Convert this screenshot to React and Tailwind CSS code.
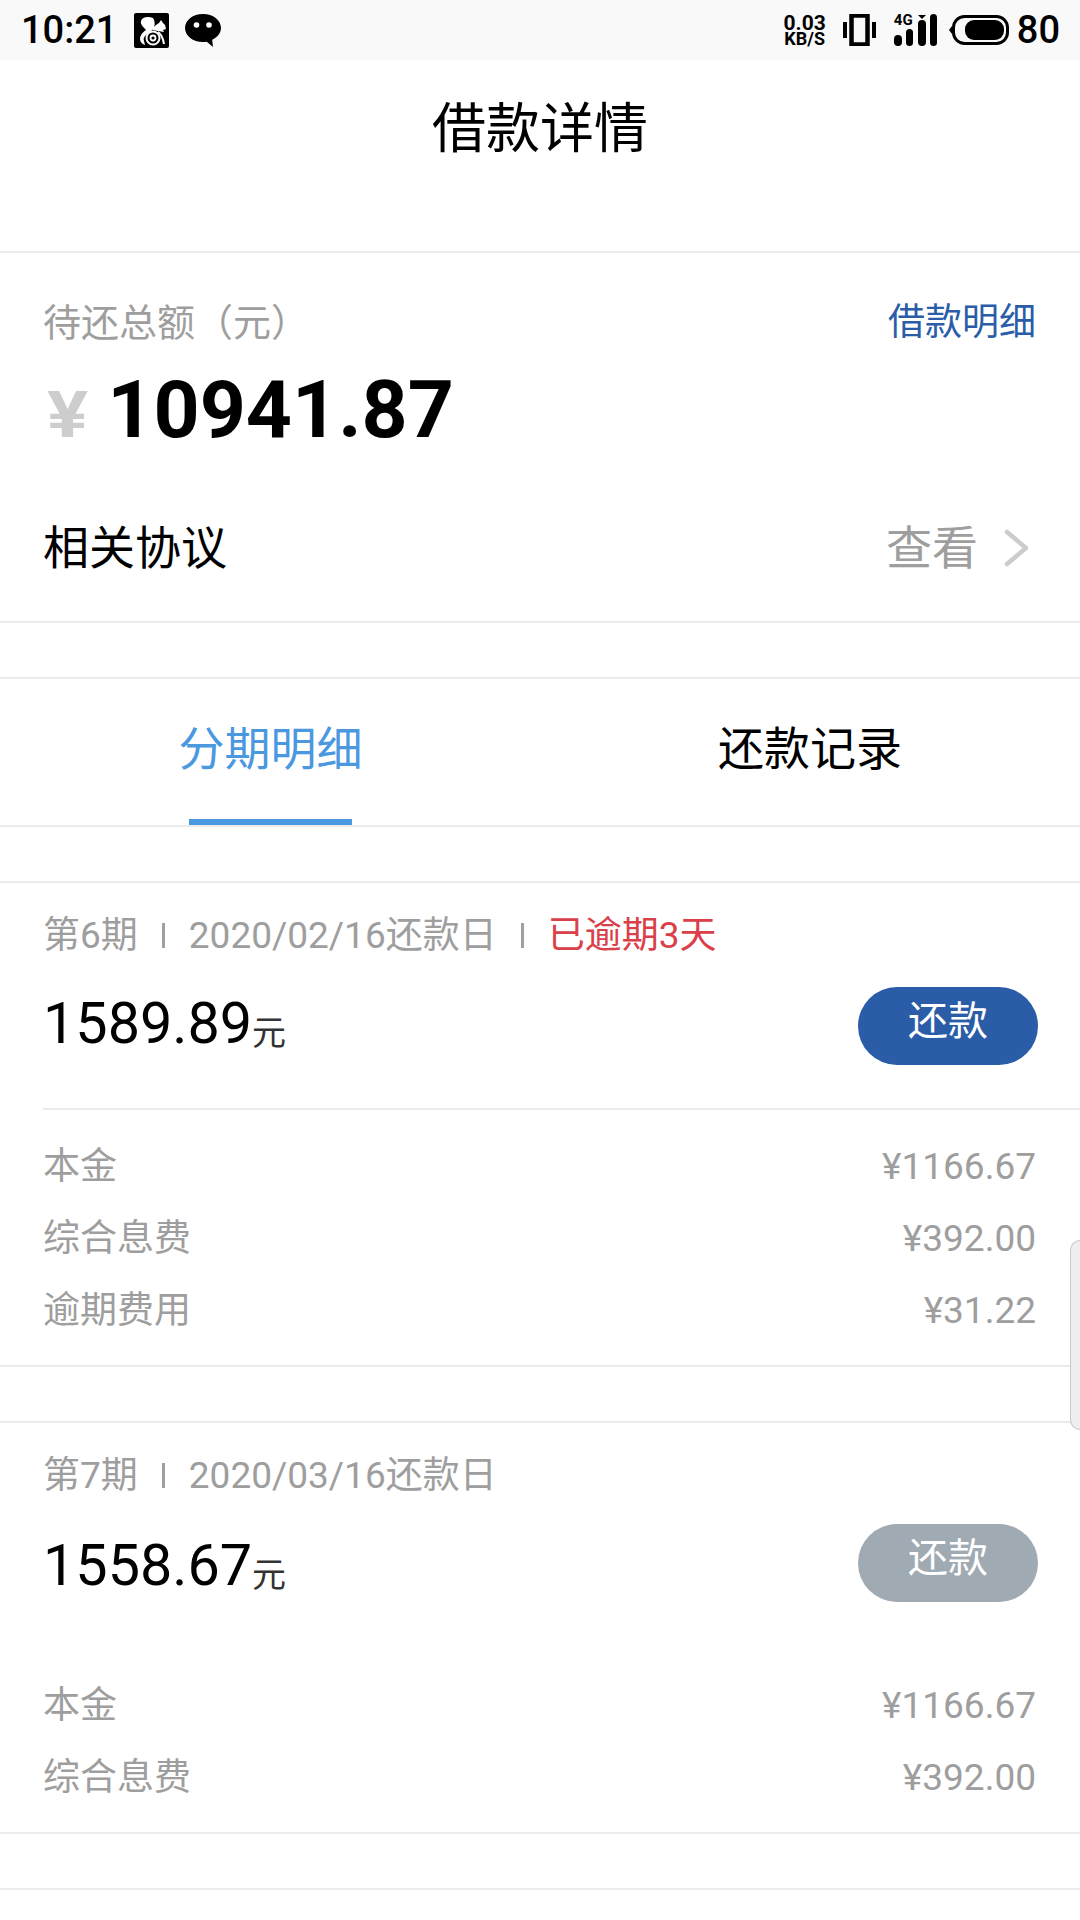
const cjk = '[font-family:Roboto,"Noto_Sans_CJK_SC",sans-serif]';

const UcIcon = () => (
  <svg width="35" height="35" viewBox="0 0 35 35">
    <rect width="35" height="35" rx="2" fill="#000" />
    {/* tail */}
    <path d="M19 5c-5-2-11-1-12 3-1 4 3 6 5 9-3 2-6 5-6 9 0 3 2 5 5 6l-1-4c-1-2 0-4 2-6 3-3 6-4 8-7 1-4 1-7-1-10z" fill="#fff" />
    {/* head and back */}
    <path d="M19 15l3-3 3-2 2-3 2 3 2 2 1 4-3 1 1 2-6-1-5-1z" fill="#fff" />
    {/* wheel */}
    <circle cx="19" cy="25" r="6.500" fill="none" stroke="#fff" strokeWidth="2" />
    <circle cx="19" cy="25" r="2.500" fill="none" stroke="#fff" strokeWidth="1.800" />
    <path d="M24 19c3 2 5 6 6 12" fill="none" stroke="#fff" strokeWidth="2" />
  </svg>
);

const ChatIcon = () => (
  <svg width="36" height="33" viewBox="0 0 36 33">
    <path d="M18 0C8 0 0 6.200 0 14s8 14 18 14c1.300 0 2.600-.1 3.800-.3L28 33l-.8-7.200C32.500 23.300 36 19 36 14 36 6.200 28 0 18 0z" fill="#000" />
    <circle cx="11.500" cy="11" r="2.800" fill="#fff" />
    <circle cx="24" cy="11" r="2.800" fill="#fff" />
  </svg>
);

const VibrateIcon = () => (
  <svg width="33" height="32" viewBox="0 0 33 32">
    <rect x="0" y="8" width="4" height="16" fill="#000" />
    <rect x="29" y="8" width="4" height="16" fill="#000" />
    <rect x="8.500" y="1.500" width="16" height="29" fill="none" stroke="#000" strokeWidth="4.500" />
  </svg>
);

const SignalIcon = () => (
  <svg width="43" height="32" viewBox="0 0 43 32">
    <rect x="0" y="21" width="8" height="11" rx="4" fill="#000" />
    <rect x="12" y="15" width="7" height="17" rx="3.500" fill="#000" />
    <path d="M24 1h8l-4 4z" fill="#000" />
    <rect x="24" y="6" width="8" height="26" rx="4" fill="#000" />
    <rect x="36" y="0" width="7" height="32" rx="3.500" fill="#000" />
  </svg>
);

const BatteryIcon = () => (
  <svg width="60" height="30" viewBox="0 0 60 30">
    <path d="M0 15l3-4v8z" fill="#000" />
    <rect x="4.500" y="1.500" width="54" height="27" rx="11" fill="none" stroke="#000" strokeWidth="3" />
    <rect x="16" y="5" width="39" height="20" rx="9" fill="#000" />
  </svg>
);

const StatusBar = () => (
  <div className="h-[60px] bg-[#f9f9f9] flex items-center justify-between pl-[21px] pr-[20px] text-black">
    <div className="flex items-center">
      <span className="text-[38px] leading-none font-medium [font-family:Roboto,sans-serif]">10:21</span>
      <span className="ml-[17px] flex"><UcIcon /></span>
      <span className="ml-[16px] flex"><ChatIcon /></span>
    </div>
    <div className="flex items-center">
      <div className="font-bold text-center [font-family:Roboto,sans-serif]">
        <div className="text-[21px] leading-[17px]">0.03</div>
        <div className="text-[18px] leading-[14px]">KB/S</div>
      </div>
      <span className="ml-[17px] flex"><VibrateIcon /></span>
      <span className="ml-[18px] relative flex">
        <span className="absolute -top-[1px] left-0 text-[15px] leading-none font-bold [font-family:Roboto,sans-serif]">4G</span>
        <SignalIcon />
      </span>
      <span className="ml-[12px] flex"><BatteryIcon /></span>
      <span className="ml-[8px] text-[38px] leading-none font-medium [font-family:Roboto,sans-serif]">80</span>
    </div>
  </div>
);

const Divider = () => <div className="h-[2px] bg-[#ebebeb]" />;

const Gap = () => <div className="h-[54px]" />;

const Instalment = ({ no, date, overdue, amount, active, fees, rowTop, amountTop, rule }) => (
  <div>
    <div className="pl-[43px] pr-[44px] pt-[18px] flex items-center h-[86px] text-[37px] leading-none text-[#9e9e9e]">
      <span>第{no}期</span>
      <span className="mx-[24px] w-[3px] h-[25px] bg-[#a0a0a0]" />
      <span>{date}还款日</span>
      {overdue && <span className="mx-[24px] w-[3px] h-[25px] bg-[#a0a0a0]" />}
      {overdue && <span className="text-[#d9404a]">{overdue}</span>}
    </div>
    <div className={`pl-[43px] pr-[44px] flex items-start justify-between ${rowTop}`}>
      <div className={`flex items-end text-black ${amountTop}`}>
        <span className="text-[57.500px] leading-[66px]">{amount}</span>
        <span className="text-[34px] leading-[48px] text-[#333]">元</span>
      </div>
      <div className={`w-[180px] h-[78px] -mr-[2px] rounded-full flex justify-center pt-[9px] text-white text-[40px] leading-[52px] ${active ? 'bg-[#2a5ca8]' : 'bg-[#a0aab3]'}`}>
        还款
      </div>
    </div>
    {rule ? <div className="ml-[43px] mt-[43px] h-[2px] bg-[#ebebeb]" /> : <div className="mt-[47px]" />}
    <div className="pl-[43px] pr-[44px] pt-[21px] pb-[18px]">
      {fees.map((f) => (
        <div key={f.label} className="flex justify-between items-center h-[72px] text-[37px] text-[#9e9e9e]">
          <span>{f.label}</span>
          <span>{f.value}</span>
        </div>
      ))}
    </div>
  </div>
);

export default function App() {
  return (
    <div className={`relative w-[1080px] h-[1920px] overflow-hidden bg-white ${cjk}`}>
      <StatusBar />

      {/* title */}
      <div className="h-[191px] flex justify-center pt-[34px] text-[54px] leading-[72px] text-black">借款详情</div>
      <Divider />

      {/* summary */}
      <div className="h-[368px] pl-[43px] pr-[44px] pt-[46px]">
        <div className="flex justify-between items-center h-[48px]">
          <span className="text-[38px] text-[#9e9e9e]">待还总额（元）</span>
          <span className="text-[37px] text-[#2a5ca8]">借款明细</span>
        </div>
        <div className="flex items-baseline h-[100px] mt-[13px] leading-[100px]">
          <span className="inline-block origin-left scale-x-[1.2] text-[64px] font-bold text-[#cdcdcd] ml-[4px]">¥</span>
          <span className="ml-[26px] text-[80.500px] font-bold text-black">10941.87</span>
        </div>
        <div className="flex justify-between items-center h-[60px] mt-[58px]">
          <span className="text-[46px] text-black">相关协议</span>
          <span className="flex items-center text-[46px] text-[#9e9e9e]">
            查看
            <svg width="24" height="38" viewBox="0 0 24 38" className="ml-[26px] mr-[8px]">
              <path d="M3 3l19 16L3 35" fill="none" stroke="#cccccc" strokeWidth="4.500" strokeLinecap="round" />
            </svg>
          </span>
        </div>
      </div>
      <Divider />
      <Gap />
      <Divider />

      {/* tabs */}
      <div className="h-[146px] grid grid-cols-2 text-[46px]">
        <div className="relative flex justify-center pt-[38px] pl-[1px] text-[#4a98e0]">
          <span className="leading-[64px]">分期明细</span>
          <span className="absolute bottom-0 left-[189px] w-[163px] h-[6px] bg-[#4a98e0]" />
        </div>
        <div className="flex justify-center pt-[38px] text-black">
          <span className="leading-[64px]">还款记录</span>
        </div>
      </div>
      <Divider />
      <Gap />
      <Divider />

      <Instalment
        no={6}
        date="2020/02/16"
        overdue="已逾期3天"
        amount="1589.89"
        active
        rule
        rowTop="mt-[18px]"
        amountTop="pt-[4px]"
        fees={[
          { label: '本金', value: '¥1166.67' },
          { label: '综合息费', value: '¥392.00' },
          { label: '逾期费用', value: '¥31.22' },
        ]}
      />
      <Divider />
      <Gap />
      <Divider />

      <Instalment
        no={7}
        date="2020/03/16"
        amount="1558.67"
        rowTop="mt-[15px]"
        amountTop="pt-[9px]"
        fees={[
          { label: '本金', value: '¥1166.67' },
          { label: '综合息费', value: '¥392.00' },
        ]}
      />
      <Divider />
      <Gap />
      <Divider />

      {/* edge handle */}
      <div className="absolute right-0 top-[1240px] w-[10px] h-[190px] rounded-l-[10px] bg-[#eeeeee] border border-r-0 border-[#c8c8c8]" />
    </div>
  );
}
